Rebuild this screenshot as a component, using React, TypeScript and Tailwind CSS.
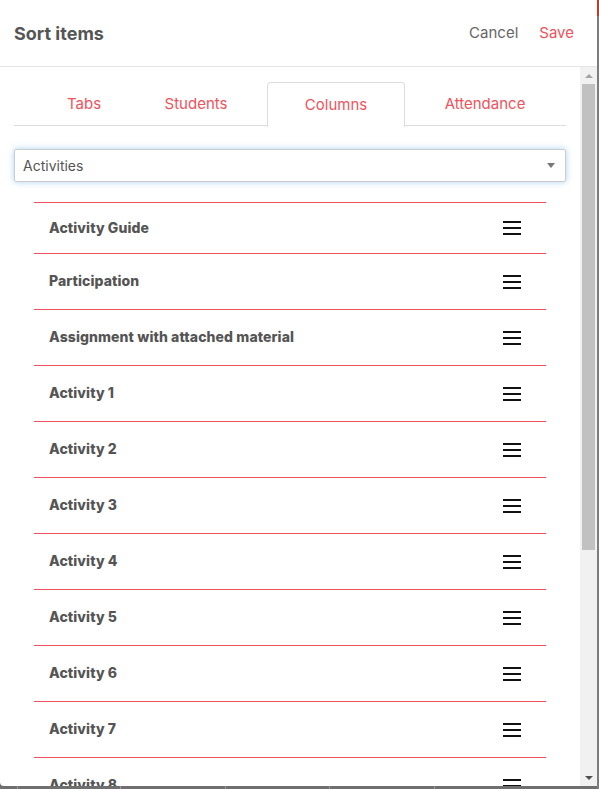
import React from 'react'

const TABS = [
  { label: 'Tabs', cls: 'w-[140px]' },
  { label: 'Students', cls: 'w-[113px] pr-[29px]' },
  { label: 'Columns', cls: 'w-[138px]', active: true },
  { label: 'Attendance', cls: 'w-[160px]' },
]

const ITEMS = [
  'Activity Guide',
  'Participation',
  'Assignment with attached material',
  'Activity 1',
  'Activity 2',
  'Activity 3',
  'Activity 4',
  'Activity 5',
  'Activity 6',
  'Activity 7',
  'Activity 8',
  'Activity 9',
]

// drag handle: three flat bars
function Handle() {
  return (
    <svg width="18" height="14" viewBox="0 0 18 14" className="shrink-0">
      <rect x="0" y="0" width="18" height="2" fill="#111" />
      <rect x="0" y="6" width="18" height="2" fill="#111" />
      <rect x="0" y="12" width="18" height="2" fill="#111" />
    </svg>
  )
}

function Scrollbar() {
  return (
    <div className="w-[17px] shrink-0 bg-[#f1f1f1] flex flex-col items-center">
      <div className="h-[17px] flex items-center justify-center">
        <div className="w-0 h-0 border-l-[4px] border-r-[4px] border-b-[4px] border-l-transparent border-r-transparent border-b-[#a3a3a3]" />
      </div>
      <div className="w-[13px] h-[466px] bg-[#c1c1c1]" />
      <div className="flex-1" />
      <div className="h-[17px] flex items-center justify-center">
        <div className="w-0 h-0 border-l-[4px] border-r-[4px] border-t-[4px] border-l-transparent border-r-transparent border-t-[#505050]" />
      </div>
    </div>
  )
}

export default function App() {
  return (
    <div
      className="relative w-[599px] h-[789px] overflow-hidden bg-[#6f6f6f]"
      style={{ fontFamily: 'Inter, "Noto Sans", Arial, sans-serif' }}
    >
      {/* page behind the dialog */}
      <div className="absolute right-0 top-0 w-[2px] h-[16px] bg-[#c0392b]" />
      <div className="absolute left-0 right-0 bottom-0 h-[4px] flex">
        <div className="w-[18px] border-r border-[#9a9a9a]" />
        <div className="w-[103px] border-r border-[#9a9a9a]" />
        <div className="w-[105px] border-r border-[#9a9a9a]" />
        <div className="w-[104px] border-r border-[#9a9a9a]" />
        <div className="w-[105px] border-r border-[#9a9a9a]" />
      </div>

      {/* dialog */}
      <div className="absolute left-0 top-0 w-[597px] h-[786px] bg-white rounded-bl-[4px] flex flex-col overflow-hidden">
        <div className="h-[67px] shrink-0 flex items-center justify-between pl-[14px] pr-[23px] border-b border-[#e5e5e5]">
          <h1 className="text-[18px] font-bold text-[#555] mt-[1px]">Sort items</h1>
          <div className="flex items-center gap-[21px] text-[15px] mt-[1px]">
            <button className="text-[#666]">Cancel</button>
            <button className="text-[#f0525c]">Save</button>
          </div>
        </div>

        <div className="flex-1 flex min-h-0">
          <div className="flex-1 min-w-0 overflow-hidden px-[14px] pt-[15px]">
            {/* tabs */}
            <div className="flex h-[44px] border-b border-[#ddd]">
              {TABS.map((t) => (
                <div
                  key={t.label}
                  className={`${t.cls} shrink-0 flex items-center justify-center text-[15px] text-[#f0525c] ${
                    t.active ? 'bg-white border border-b-0 border-[#ddd] rounded-t-[4px] -mb-px h-[45px]' : 'pt-[2px]'
                  }`}
                >
                  {t.label}
                </div>
              ))}
            </div>

            {/* category select */}
            <div className="mt-[23px] h-[33px] border border-[#ccc] rounded-[2px] shadow-[0_0_6px_rgba(102,175,233,0.55)] flex items-center justify-between pl-[8px] pr-[10px]">
              <span className="text-[14px] text-[#555]">Activities</span>
              <div className="w-0 h-0 border-l-[4px] border-r-[4px] border-t-[5px] border-l-transparent border-r-transparent border-t-[#777]" />
            </div>

            {/* sortable list */}
            <div className="mx-[20px] mt-[20px] border-t border-[#f0525c]">
              {ITEMS.map((item, i) => (
                <div
                  key={item}
                  className={`${i === 0 ? 'h-[51px]' : 'h-[56px]'} flex items-center justify-between pl-[15px] pr-[25px] border-b border-[#f0525c]`}
                >
                  <span className="text-[14px] font-extrabold text-[#555] tracking-[0.1px] -mt-[2px]">{item}</span>
                  <Handle />
                </div>
              ))}
            </div>
          </div>
          <Scrollbar />
        </div>
      </div>
      <div className="absolute left-[597px] top-[16px] w-[2px] h-[773px] bg-[#7d7d7d]" />
    </div>
  )
}
